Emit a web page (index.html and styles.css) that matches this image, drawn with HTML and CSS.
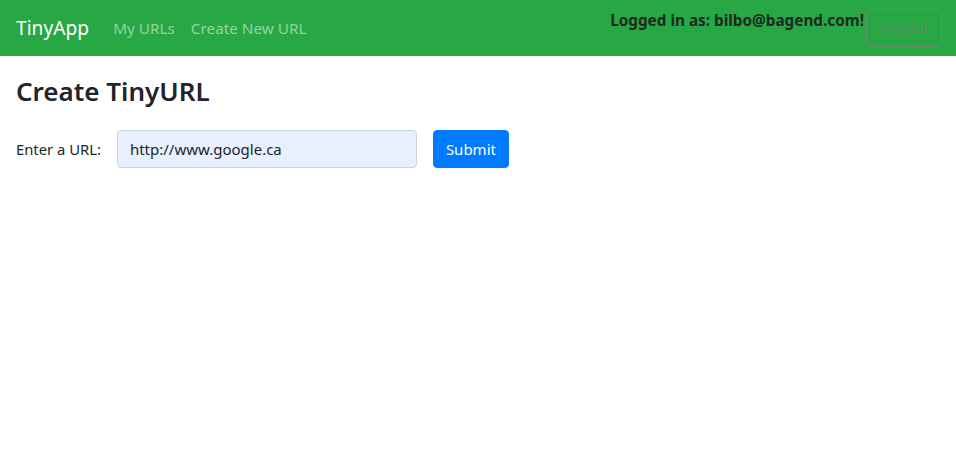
FILE: index.html
```html
<!DOCTYPE html>
<html>
<head>
<meta charset="utf-8">
<link rel="stylesheet" href="styles.css">
</head>
<body>
<nav class="navbar">
  <a class="brand" href="#">TinyApp</a>
  <div class="nav-links">
    <a class="nav-link" href="#">My URLs</a>
    <a class="nav-link" href="#">Create New URL</a>
  </div>
  <div class="user">
    <span class="logged">Logged in as: bilbo@bagend.com!</span>
    <button class="logout">Logout</button>
  </div>
</nav>
<main class="content">
  <h3 class="title">Create TinyURL</h3>
  <form class="url-form">
    <label class="label" for="url">Enter a URL:</label>
    <input class="input" id="url" type="text" value="http://www.google.ca">
    <button class="submit" type="button">Submit</button>
  </form>
</main>
</body>
</html>
```
FILE: styles.css
```css
* { box-sizing: border-box; }
body {
  margin: 0;
  font-family: "Noto Sans", "Open Sans", sans-serif;
  color: #212529;
  background: #fff;
  font-size: 16px;
}
.navbar {
  height: 56px;
  background: #28a745;
  display: flex;
  align-items: center;
  padding: 0 16px;
}
.brand {
  font-size: 19.2px;
  color: #fff;
  text-decoration: none;
  margin-right: 16px;
  margin-top: -1px;
}
.nav-links { display: flex; flex: 1; }
.nav-link {
  color: rgba(255,255,255,0.5);
  text-decoration: none;
  font-size: 15.3px;
  padding: 0 8px;
}
.user {
  display: flex;
  align-items: center;
  align-self: stretch;
  margin-right: -2px;
}
.logged {
  font-weight: 700;
  font-size: 15.3px;
  color: #1b2a20;
  align-self: flex-start;
  margin-top: 10px;
}
.logout {
  font-family: inherit;
  font-size: 15px;
  color: #5e8f62;
  background: transparent;
  border: 1px solid #6a8d6e;
  border-radius: 4px;
  width: 76px;
  height: 38px;
  margin-left: 2px;
  padding: 0;
}
.content { padding: 0 16px; }
.title {
  margin: 18px 0 22px;
  font-size: 26px;
  font-weight: 600;
  line-height: 34px;
}
.url-form { display: flex; align-items: center; }
.label { font-size: 14.8px; margin-right: 16px; }
.input {
  width: 300px;
  height: 38px;
  background: #e8f0fe;
  border: 1px solid #ced4da;
  border-radius: 4px;
  padding: 0 12px;
  font-family: inherit;
  font-size: 15px;
  color: #212529;
  margin-right: 16px;
}
.submit {
  height: 38px;
  width: 76px;
  background: #007bff;
  color: #fff;
  border: 1px solid #007bff;
  border-radius: 4px;
  font-family: inherit;
  font-size: 15px;
  padding: 0;
}
```
